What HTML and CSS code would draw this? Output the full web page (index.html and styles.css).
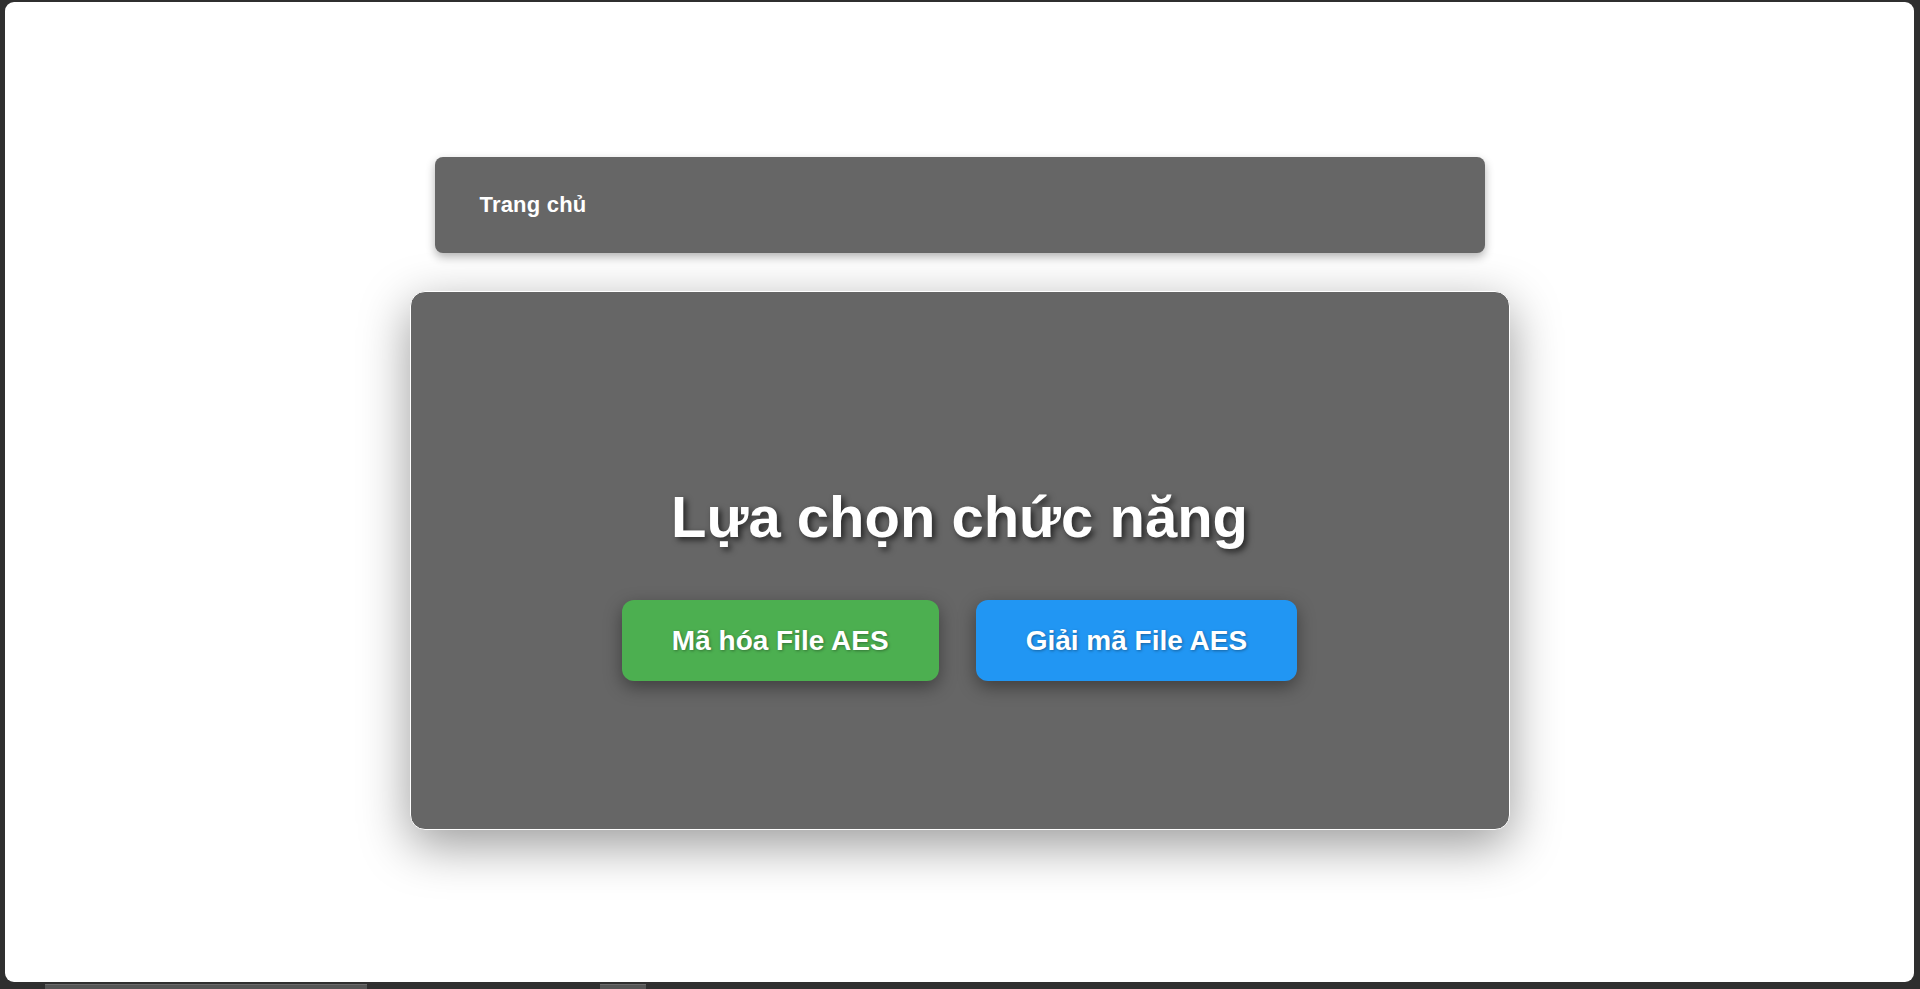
FILE: index.html
```html
<!DOCTYPE html>
<html lang="vi">
<head>
<meta charset="utf-8">
<title>Lựa chọn chức năng</title>
<link rel="stylesheet" href="styles.css">
</head>
<body>
<div class="frame">
  <nav class="navbar">
    <a class="nav-link" href="#">Trang chủ</a>
  </nav>
  <main class="card">
    <h1 class="title">Lựa chọn chức năng</h1>
    <div class="actions">
      <a class="btn btn-green" href="#">Mã hóa File AES</a>
      <a class="btn btn-blue" href="#">Giải mã File AES</a>
    </div>
  </main>
</div>
<div class="statusbar">
  <span class="seg seg-a"></span>
  <span class="seg seg-b"></span>
</div>
</body>
</html>
```
FILE: styles.css
```css
html, body {
  margin: 0;
  padding: 0;
}
body {
  background: #2f2f2f;
  font-family: "Liberation Sans", Arial, sans-serif;
  height: 989px;
  overflow: hidden;
}
.frame {
  margin: 2px 6px 0 5px;
  height: 980px;
  background: #ffffff;
  border-radius: 9px;
  padding-top: 155px;
  box-sizing: border-box;
  display: flex;
  flex-direction: column;
  align-items: center;
}
.navbar {
  width: 1050px;
  height: 96px;
  box-sizing: border-box;
  background: #666666;
  border-radius: 8px;
  box-shadow: 0 4px 10px rgba(0, 0, 0, 0.3);
  display: flex;
  align-items: center;
  padding: 0 45px;
}
.nav-link {
  color: #ffffff;
  font-weight: bold;
  font-size: 22px;
  letter-spacing: 0.2px;
  text-decoration: none;
}
.card {
  margin-top: 38px;
  width: 1100px;
  height: 539px;
  box-sizing: border-box;
  background: #666666;
  border: 1px solid #ffffff;
  border-radius: 15px;
  box-shadow: 0 15px 50px rgba(0, 0, 0, 0.4);
  display: flex;
  flex-direction: column;
  align-items: center;
  justify-content: center;
  padding-top: 42px;
}
.title {
  margin: 0 0 50px;
  color: #ffffff;
  font-size: 58px;
  font-weight: bold;
  text-shadow: 3px 3px 6px rgba(0, 0, 0, 0.65);
}
.actions {
  display: flex;
  gap: 37px;
}
.btn {
  display: block;
  padding: 24px 50px;
  line-height: 33px;
  font-size: 28px;
  font-weight: bold;
  color: #ffffff;
  text-decoration: none;
  border-radius: 12px;
  box-shadow: 0 6px 18px rgba(0, 0, 0, 0.4);
  text-shadow: 1px 1px 3px rgba(0, 0, 0, 0.35);
}
.btn-green {
  background: #4caf50;
}
.btn-blue {
  background: #2196f3;
}
.statusbar {
  height: 7px;
  display: flex;
  align-items: flex-end;
}
.seg {
  display: block;
  height: 5px;
  background: #555555;
  border-top: 1px solid #6a6a6a;
  box-sizing: border-box;
}
.seg-a {
  margin-left: 45px;
  width: 322px;
}
.seg-b {
  margin-left: 233px;
  width: 46px;
}
```
